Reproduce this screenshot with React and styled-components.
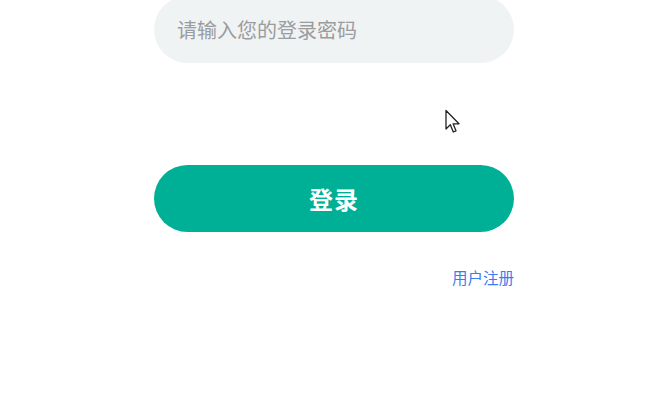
import React from 'react';
import styled, { createGlobalStyle } from 'styled-components';

const GlobalStyle = createGlobalStyle`
  html, body {
    margin: 0;
    padding: 0;
    background: #fff;
    font-family: "Noto Sans CJK SC", "Noto Sans", sans-serif;
  }
`;

const Page = styled.div`
  position: relative;
  width: 670px;
  height: 415px;
  overflow: hidden;
  display: flex;
  justify-content: center;
  padding-right: 2px;
  box-sizing: border-box;
`;

const Form = styled.div`
  width: 360px;
  display: flex;
  flex-direction: column;
  margin-top: -4px;
`;

const PasswordInput = styled.input`
  height: 67px;
  box-sizing: border-box;
  border: none;
  outline: none;
  border-radius: 34px;
  background: #f0f3f4;
  padding: 0 23px;
  font-family: inherit;
  font-size: 20px;
  color: #333;

  &::placeholder {
    color: #9a9c9e;
  }
`;

const LoginButton = styled.button`
  margin-top: 102px;
  height: 67px;
  border: none;
  border-radius: 34px;
  background: #00b096;
  color: #fff;
  font-family: inherit;
  font-size: 24px;
  font-weight: 700;
  letter-spacing: 1px;
  cursor: pointer;
`;

const Links = styled.div`
  display: flex;
  justify-content: flex-end;
  margin-top: 34px;
`;

const RegisterLink = styled.a`
  font-size: 15.5px;
  line-height: 22px;
  color: #3b7cf0;
  text-decoration: none;
  cursor: pointer;
`;

const Pointer = styled.svg`
  position: absolute;
  left: 444px;
  top: 109px;
  pointer-events: none;
`;

export default function App() {
  return (
    <Page>
      <GlobalStyle />
      <Form>
        <PasswordInput type="password" placeholder="请输入您的登录密码" />
        <LoginButton>登录</LoginButton>
        <Links>
          <RegisterLink>用户注册</RegisterLink>
        </Links>
      </Form>
      <Pointer width="18" height="26" viewBox="0 0 18 26">
        <path
          d="M2 1.5 L2 20 L6.3 15.8 L9.3 23 L12 21.8 L9.1 14.8 L15 14.8 Z"
          fill="#fff"
          stroke="#222"
          strokeWidth="1.3"
          strokeLinejoin="round"
        />
      </Pointer>
    </Page>
  );
}
